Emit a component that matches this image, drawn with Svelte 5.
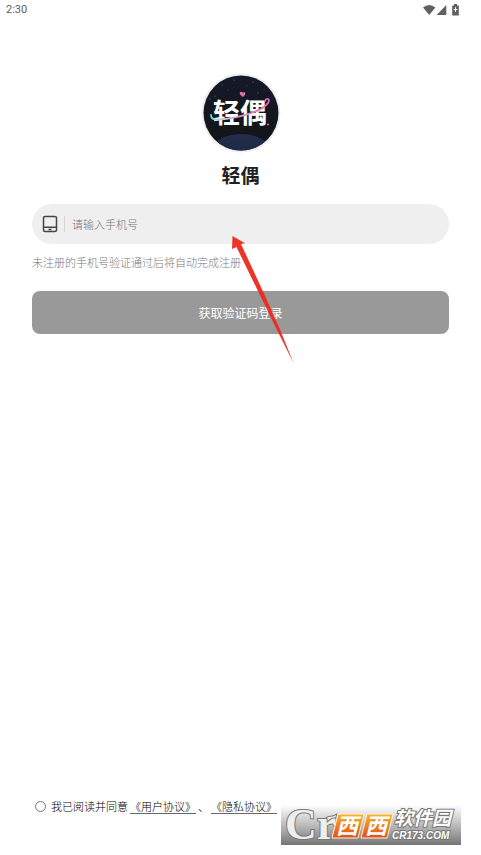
<script lang="ts">
	let phone = $state('');
	let agreed = $state(false);

	const stars = [
		[9, 26, 0.6], [14, 23, 0.5], [21, 12, 0.5], [27, 17, 0.4], [33, 7, 0.5],
		[46, 13, 0.4], [52, 9, 0.5], [57, 20, 0.5], [63, 17, 0.4], [41, 24, 0.4]
	];

	function submit(event: Event) {
		event.preventDefault();
	}
</script>

<div class="page">
	<header class="status">
		<span>2:30</span>
		<svg class="status-icons" width="38" height="12" viewBox="0 0 38 12" aria-hidden="true">
			<path d="M0 3.4Q6.2-1.6 12.4 3.4L6.2 11z" />
			<path d="M23.3 1v10H13.6z" />
			<path d="M31 0h3v1.4h1.8v10h-6.6v-10H31z" />
			<path d="M32.5 3.2v4.6M30.8 5.5h3.5" class="bolt" />
		</svg>
	</header>

	<main>
		<svg class="logo" width="80" height="80" viewBox="0 0 80 80" aria-hidden="true">
			<defs>
				<linearGradient id="sky" x1="0" y1="0" x2="0" y2="1">
					<stop offset="0" stop-color="#151a2b" />
					<stop offset="0.5" stop-color="#15171f" />
					<stop offset="1" stop-color="#121315" />
				</linearGradient>
				<linearGradient id="planet" x1="0" y1="0" x2="0" y2="1">
					<stop offset="0" stop-color="#222d4d" />
					<stop offset="1" stop-color="#172238" />
				</linearGradient>
				<linearGradient id="orbit" x1="0" y1="0" x2="1" y2="0">
					<stop offset="0" stop-color="#75d9cf" />
					<stop offset="0.15" stop-color="#b4d5d9" />
					<stop offset="0.35" stop-color="#e0a9d2" />
					<stop offset="1" stop-color="#dc68bd" />
				</linearGradient>
				<clipPath id="disc"><circle cx="40" cy="40" r="37.5" /></clipPath>
			</defs>
			<circle cx="40" cy="40" r="39.5" fill="#eeeef2" />
			<g clip-path="url(#disc)">
				<rect width="80" height="80" fill="url(#sky)" />
				<ellipse cx="40" cy="88" rx="36" ry="27" fill="url(#planet)" />
				{#each stars as [cx, cy, r]}
					<circle {cx} {cy} {r} fill="#8189a2" />
				{/each}
			</g>
			<text x="39" y="50" text-anchor="middle" class="logo-text">轻偶</text>
			<path
				d="M10 42q0 5 7 4.5C34 46 61 39 67 30c3-5-2-5-3-2"
				fill="none"
				stroke="url(#orbit)"
				stroke-width="1.8"
				stroke-linecap="round"
			/>
			<path d="M42 24l-3-2.6q-1-2.6 1.2-2.7 1.1.1 1.6 1.2 1.2-1.4 2.3-.4 1 1.7-2.1 4.5z" fill="#dc70b6" />
			<circle cx="67" cy="51.5" r="1" fill="#cc7fb4" />
		</svg>
		<h1>轻偶</h1>

		<form onsubmit={submit}>
			<div class="field">
				<svg width="16" height="18" viewBox="0 0 16 18" aria-hidden="true">
					<rect x="1.5" y="1.5" width="13" height="15" rx="1.5" />
					<path d="M1.5 12.2h13M6.5 14.4h3" />
				</svg>
				<input type="tel" aria-label="手机号" placeholder="请输入手机号" bind:value={phone} />
			</div>
			<p class="hint">未注册的手机号验证通过后将自动完成注册</p>
			<button type="submit">获取验证码登录</button>

			<svg class="arrow" width="64" height="130" viewBox="0 0 64 130" aria-hidden="true">
				<path d="M2.5 1L15 8.2l-4 .8 21.800 47L49 92l14.500 36L45 91 28 56 6.500 12 2 14z" />
			</svg>
		</form>
	</main>

	<footer>
		<input id="agree" type="checkbox" bind:checked={agreed} />
		<label for="agree">我已阅读并同意</label>
		<a href="#terms">《用户协议》</a>
		<span>、</span>
		<a href="#privacy">《隐私协议》</a>
	</footer>

	<svg class="watermark" width="180" height="56" viewBox="0 -6 180 56" aria-label="西西软件园 CR173.COM">
		<defs>
			<linearGradient id="fade" x1="0" y1="0" x2="0" y2="1">
				<stop offset="0" stop-color="#fff" />
				<stop offset="0.5" stop-color="#bcbcbc" />
				<stop offset="1" stop-color="#757575" />
			</linearGradient>
			<linearGradient id="orange" x1="0" y1="0" x2="0" y2="1">
				<stop offset="0" stop-color="#f8b52c" />
				<stop offset="1" stop-color="#e34c1c" />
			</linearGradient>
		</defs>
		<rect width="180" height="40" fill="url(#fade)" />
		<path d="M43 17C45 10 50 13 55 10 54 16 50 20 44 19z" class="leaf" />
		<text x="4" y="34" class="mark">Cr</text>
		<path d="M57 9h26l-6 24H51zM86 9h26l-6 24H80z" class="tile" />
		<text x="55" y="29" class="xi">西</text>
		<text x="84" y="29" class="xi">西</text>
		<text x="113" y="20" class="soft">软件园</text>
		<text x="111" y="34" class="domain">CR173.COM</text>
	</svg>
</div>

<style>
	:global(body) {
		margin: 0;
		background: #fff;
	}

	.page {
		position: relative;
		box-sizing: border-box;
		display: flex;
		flex-direction: column;
		min-height: 100vh;
		color: #202020;
		font-family: "Noto Sans CJK SC", sans-serif;
		font-size: 11px;
		font-weight: 300;
		line-height: 16px;
	}

	.status {
		display: flex;
		align-items: center;
		justify-content: space-between;
		height: 20px;
		padding: 0 20px 0 6px;
		color: #606060;
		font-family: Roboto, sans-serif;
		font-weight: 400;
	}

	.status-icons {
		fill: #606060;
	}

	.bolt {
		stroke: #fff;
		stroke-width: 1;
	}

	main {
		display: flex;
		flex: 1;
		flex-direction: column;
		align-items: center;
		padding: 53px 32px 0;
	}

	.logo-text {
		fill: #fff;
		font-size: 27px;
		font-weight: 700;
		font-style: oblique 10deg;
	}

	h1 {
		margin: 8px 0 15px;
		font-size: 19px;
		font-weight: 700;
		line-height: 28px;
	}

	form {
		position: relative;
		width: 100%;
	}

	.field {
		display: flex;
		align-items: center;
		height: 40px;
		padding: 0 16px 0 10px;
		border-radius: 20px;
		background: #efefef;
	}

	.field svg {
		flex: none;
		fill: none;
		stroke: #454545;
		stroke-width: 1.5;
	}

	.field input {
		flex: 1;
		min-width: 0;
		height: 16px;
		margin-left: 6px;
		padding: 0 0 0 7px;
		border: 0;
		border-left: 1px solid #d4d4d4;
		outline: 0;
		background: none;
		color: #202020;
		font: inherit;
	}

	.field input::placeholder {
		color: #777;
		opacity: 1;
	}

	.hint {
		margin: 10px 0 21px;
		color: #777;
	}

	button {
		display: block;
		width: 100%;
		height: 43px;
		border: 0;
		border-radius: 8px;
		background: #999;
		color: #fff;
		font: inherit;
		font-size: 12px;
		font-weight: 400;
	}

	.arrow {
		position: absolute;
		top: 31px;
		left: 198px;
		fill: #ed2a1c;
		opacity: 0.95;
		pointer-events: none;
	}

	footer {
		display: flex;
		align-items: center;
		gap: 2px;
		padding: 0 32px 41px 35px;
		color: #000;
	}

	footer input {
		appearance: none;
		width: 11px;
		height: 11px;
		margin: 0 3px 0 0;
		border: 1px solid #777;
		border-radius: 50%;
	}

	footer input:checked {
		background: #777;
	}

	footer a {
		color: inherit;
		text-decoration-color: #666;
		text-underline-offset: 2px;
	}

	.watermark {
		position: absolute;
		right: 20px;
		bottom: 0;
	}

	.mark,
	.leaf {
		fill: #eee;
		stroke: #777;
		stroke-width: 2;
		paint-order: stroke;
	}

	.mark {
		font-family: "Liberation Serif", serif;
		font-size: 44px;
		font-weight: 700;
	}

	.tile {
		fill: url(#orange);
		stroke: #fff3dc;
		stroke-width: 1;
	}

	.xi {
		fill: #fff;
		font-size: 22px;
		font-style: italic;
		font-weight: 700;
	}

	.soft,
	.domain {
		fill: #fff;
		stroke: #777;
		stroke-width: 2;
		paint-order: stroke;
		font-style: italic;
	}

	.soft {
		font-size: 19px;
		font-weight: 700;
	}

	.domain {
		font-family: "Liberation Sans", sans-serif;
		font-size: 10px;
		font-weight: 700;
	}
</style>
